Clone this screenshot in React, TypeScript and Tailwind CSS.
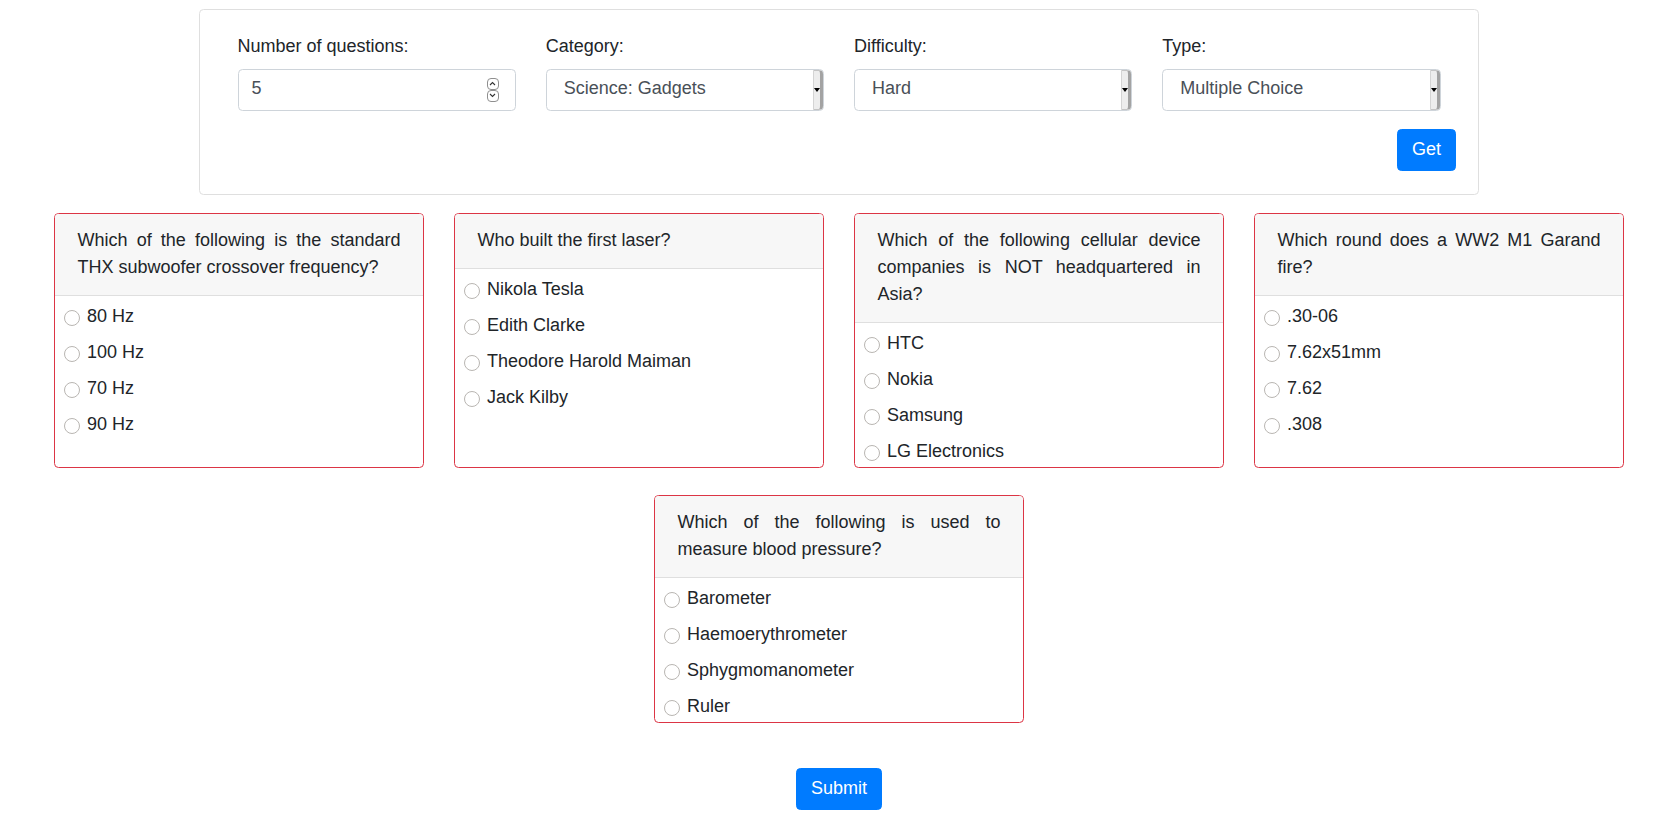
import React from "react";

type Question = {
  question: string;
  answers: string[];
};

const questions: Question[] = [
  {
    question: "Which of the following is the standard THX subwoofer crossover frequency?",
    answers: ["80 Hz", "100 Hz", "70 Hz", "90 Hz"],
  },
  {
    question: "Who built the first laser?",
    answers: ["Nikola Tesla", "Edith Clarke", "Theodore Harold Maiman", "Jack Kilby"],
  },
  {
    question: "Which of the following cellular device companies is NOT headquartered in Asia?",
    answers: ["HTC", "Nokia", "Samsung", "LG Electronics"],
  },
  {
    question: "Which round does a WW2 M1 Garand fire?",
    answers: [".30-06", "7.62x51mm", "7.62", ".308"],
  },
  {
    question: "Which of the following is used to measure blood pressure?",
    answers: ["Barometer", "Haemoerythrometer", "Sphygmomanometer", "Ruler"],
  },
];

function FakeSelect({ value }: { value: string }) {
  return (
    <div className="relative h-[42px] w-full rounded-[4.5px] border border-[#ced4da] bg-white">
      <span className="block pl-[17px] pt-[5.5px] leading-[27px] text-[#495057]">{value}</span>
      {/* native-looking arrow strip */}
      <div className="absolute right-0 top-0 bottom-0 w-[10px] flex items-center justify-center rounded-r-[4px] border-l border-[#d4d4d4] border-r-[3px] border-r-[#a3a3a3] border-y border-y-[#c4c4c4] bg-[#ededed]">
        <span className="block w-0 h-0 border-l-[3px] border-r-[3px] border-t-[4px] border-l-transparent border-r-transparent border-t-black" />
      </div>
    </div>
  );
}

function NumberInput({ value }: { value: string }) {
  return (
    <div className="relative h-[42px] w-full rounded-[4.5px] border border-[#ced4da] bg-white">
      <span className="block pl-[13px] pt-[5.5px] leading-[27px] text-[#495057]">{value}</span>
      <div className="absolute right-[16px] top-1/2 -translate-y-1/2 flex flex-col">
        <span className="flex h-[12px] w-[12px] items-center justify-center rounded-[4px] border border-[#8f8f8f] bg-white">
          <svg width="7" height="5" viewBox="0 0 7 5">
            <path d="M1 4 L3.5 1.5 L6 4" fill="none" stroke="#333" strokeWidth="1.1" />
          </svg>
        </span>
        <span className="flex h-[12px] w-[12px] items-center justify-center rounded-[4px] border border-[#8f8f8f] bg-white">
          <svg width="7" height="5" viewBox="0 0 7 5">
            <path d="M1 1 L3.5 3.5 L6 1" fill="none" stroke="#333" strokeWidth="1.1" />
          </svg>
        </span>
      </div>
    </div>
  );
}

function QuestionCard({ item }: { item: Question }) {
  return (
    <div className="flex flex-col overflow-hidden rounded-[4.5px] border border-[#dc3545] bg-white">
      <div className="border-b border-[#dfdfdf] bg-[#f7f7f7] px-[22.5px] py-[13.5px] text-justify">
        {item.question}
      </div>
      <div>
        {item.answers.map((ans) => (
          <label key={ans} className="flex h-[36px] items-start pl-[9px]">
            <span className="mt-[14px] h-[16px] w-[16px] shrink-0 rounded-full border border-[#b9b6b2] bg-white" />
            <span className="ml-[7px] mt-[7.5px] leading-[27px]">{ans}</span>
          </label>
        ))}
      </div>
    </div>
  );
}

export default function App() {
  return (
    <div className="min-h-screen bg-white font-['Liberation_Sans',Arial,sans-serif] text-[18px] leading-[27px] text-[#212529]">
      <div className="flex flex-col items-center pl-[11px]">
        {/* Filter form */}
        <div className="mt-[9px] w-[1280px] rounded-[4.5px] border border-[#dfdfdf] p-[22.5px]">
          <div className="grid grid-cols-4">
            <div className="px-[15px]">
              <p className="mb-[9px]">Number of questions:</p>
              <NumberInput value="5" />
            </div>
            <div className="px-[15px]">
              <p className="mb-[9px]">Category:</p>
              <FakeSelect value="Science: Gadgets" />
            </div>
            <div className="px-[15px]">
              <p className="mb-[9px]">Difficulty:</p>
              <FakeSelect value="Hard" />
            </div>
            <div className="px-[15px]">
              <p className="mb-[9px]">Type:</p>
              <FakeSelect value="Multiple Choice" />
            </div>
          </div>
          <div className="mt-[18px] flex justify-end">
            <button className="rounded-[4.5px] border border-[#007bff] bg-[#007bff] px-[13.5px] py-[6.75px] leading-[27px] text-white">
              Get
            </button>
          </div>
        </div>

        {/* Questions */}
        <div className="mt-[18px] grid w-[1570px] grid-cols-4 gap-[30px]">
          {questions.slice(0, 4).map((q) => (
            <QuestionCard key={q.question} item={q} />
          ))}
        </div>
        <div className="mt-[27px] w-[370px]">
          <QuestionCard item={questions[4]} />
        </div>

        <button className="mt-[45px] rounded-[4.5px] border border-[#007bff] bg-[#007bff] px-[13.5px] py-[6.75px] leading-[27px] text-white">
          Submit
        </button>
      </div>
    </div>
  );
}
